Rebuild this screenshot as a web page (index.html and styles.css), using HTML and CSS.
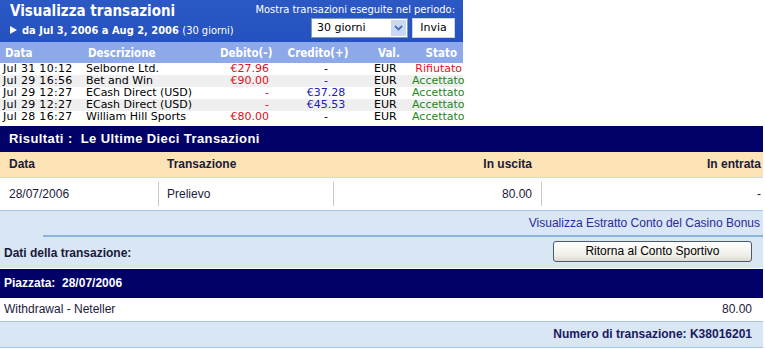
FILE: index.html
```html
<!DOCTYPE html>
<html lang="it">
<head>
    <meta charset="UTF-8">
    <title>Visualizza transazioni</title>
    <link rel="stylesheet" href="styles.css">
</head>
<body>
    <div class="panel">
        <div class="panelHead">
            <div class="headLeft">
                <div class="title">Visualizza transazioni</div>
                <div class="period"><svg class="arrow" width="7" height="8" viewBox="0 0 7 8"><polygon points="0,0 7,4 0,8" fill="#ffffff"/></svg>da Jul 3, 2006 a Aug 2, 2006 <span class="days">(30 giorni)</span></div>
            </div>
            <div class="headRight">
                <div class="showLabel">Mostra transazioni eseguite nel periodo:</div>
                <div class="controls">
                    <div class="select">30 giorni<span class="selBtn"><svg width="9" height="6" viewBox="0 0 9 6"><path d="M1 1 L4.5 4.5 L8 1" fill="none" stroke="#4d6fb8" stroke-width="1.8"/></svg></span></div>
                    <div class="sendBtn">Invia</div>
                </div>
            </div>
        </div>
        <table class="trans">
            <tr class="thead">
                <td class="cDate">Data</td>
                <td class="cDesc">Descrizione</td>
                <td class="cDeb">Debito(-)</td>
                <td class="cCred">Credito(+)</td>
                <td class="cVal">Val.</td>
                <td class="cStato">Stato</td>
            </tr>
            <tr>
                <td class="cDate">Jul 31 10:12</td><td class="cDesc">Selborne Ltd.</td>
                <td class="cDeb red">€27.96</td><td class="cCred">-</td><td class="cVal">EUR</td><td class="cStato red">Rifiutato</td>
            </tr>
            <tr class="alt">
                <td class="cDate">Jul 29 16:56</td><td class="cDesc">Bet and Win</td>
                <td class="cDeb red">€90.00</td><td class="cCred blue">-</td><td class="cVal">EUR</td><td class="cStato green">Accettato</td>
            </tr>
            <tr>
                <td class="cDate">Jul 29 12:27</td><td class="cDesc">ECash Direct (USD)</td>
                <td class="cDeb red">-</td><td class="cCred blue">€37.28</td><td class="cVal">EUR</td><td class="cStato green">Accettato</td>
            </tr>
            <tr class="alt">
                <td class="cDate">Jul 29 12:27</td><td class="cDesc">ECash Direct (USD)</td>
                <td class="cDeb red">-</td><td class="cCred blue">€45.53</td><td class="cVal">EUR</td><td class="cStato green">Accettato</td>
            </tr>
            <tr>
                <td class="cDate">Jul 28 16:27</td><td class="cDesc">William Hill Sports</td>
                <td class="cDeb red">€80.00</td><td class="cCred">-</td><td class="cVal">EUR</td><td class="cStato green">Accettato</td>
            </tr>
        </table>
    </div>

    <div class="results">
        <div class="navyBar">Risultati :&nbsp; Le Ultime Dieci Transazioni</div>
        <div class="resRow resHead">
            <div class="rDate">Data</div>
            <div class="rTrans">Transazione</div>
            <div class="rOut">In uscita</div>
            <div class="rIn">In entrata</div>
        </div>
        <div class="resRow resData">
            <div class="rDate">28/07/2006</div>
            <div class="rTrans sep">Prelievo</div>
            <div class="rOut sep">80.00</div>
            <div class="rIn sep">-</div>
        </div>
        <div class="linkRow"><a href="#">Visualizza Estratto Conto del Casino Bonus</a></div>
        <div class="detailBar">
            <div class="detailLabel">Dati della transazione:</div>
            <div class="backBtn">Ritorna al Conto Sportivo</div>
        </div>
        <div class="navyBar placed">Piazzata:&nbsp; 28/07/2006</div>
        <div class="whiteRow">
            <span>Withdrawal - Neteller</span>
            <span>80.00</span>
        </div>
        <div class="numRow">Numero di transazione: K38016201</div>
    </div>
</body>
</html>
```

FILE: styles.css
```css
body{
    margin: 0;
    background: #ffffff;
    font-family: "DejaVu Sans", Verdana, sans-serif;
}

.panel{
    width: 463px;
}
.panelHead{
    height: 42px;
    background: linear-gradient(#2c58c4, #2452c0);
    color: #ffffff;
    display: flex;
    justify-content: space-between;
}
.headLeft{
    padding: 2px 0 0 10px;
}
.title{
    font-family: "DejaVu Sans Condensed", sans-serif;
    font-weight: bold;
    font-size: 15px;
    line-height: 19px;
}
.period{
    font-family: "DejaVu Sans Condensed", sans-serif;
    font-weight: bold;
    font-size: 11px;
    margin-top: 3px;
}
.arrow{
    margin-right: 5px;
    vertical-align: 0;
}
.days{
    font-weight: normal;
}
.headRight{
    padding: 3px 8px 0 0;
    display: flex;
    flex-direction: column;
    align-items: flex-end;
}
.showLabel{
    font-family: "DejaVu Sans Condensed", sans-serif;
    font-size: 11px;
    line-height: 13px;
}
.controls{
    display: flex;
    gap: 4px;
    margin-top: 2px;
}
.select{
    width: 90px;
    height: 18px;
    background: #ffffff;
    border: 1px solid #7f9db9;
    color: #000000;
    font-size: 11px;
    line-height: 18px;
    padding-left: 5px;
    position: relative;
}
.selBtn{
    position: absolute;
    right: 1px;
    top: 1px;
    width: 15px;
    height: 16px;
    background: #c9d8f5;
    display: flex;
    align-items: center;
    justify-content: center;
}
.sendBtn{
    width: 41px;
    height: 18px;
    background: #ffffff;
    border: 1px solid #d0d0d0;
    color: #000000;
    font-size: 11px;
    line-height: 18px;
    text-align: center;
}

.trans{
    width: 463px;
    border-collapse: collapse;
    table-layout: fixed;
    font-size: 11px;
}
.trans td{
    box-sizing: border-box;
    padding: 0;
    height: 12px;
    line-height: 12px;
    white-space: nowrap;
    overflow: visible;
}
.trans .thead td{
    background: #8da9ea;
    color: #ffffff;
    font-family: "DejaVu Sans Condensed", sans-serif;
    font-weight: bold;
    font-size: 11.5px;
    height: 21px;
}
.trans .alt td{
    background: #efefef;
}
.trans .cDate{ width: 84px; padding-left: 3px; letter-spacing: 0.3px; }
.trans .thead .cDate{ padding-left: 5px; letter-spacing: 0; }
.trans .cDesc{ width: 136px; padding-left: 2px; }
.trans .thead .cDesc{ padding-left: 4px; }
.trans .cDeb{ width: 55px; text-align: right; padding-right: 6px; }
.trans .thead .cDeb{ padding-right: 3px; }
.trans .cCred{ width: 97px; text-align: center; padding-left: 5px; }
.trans .thead .cCred{ padding-left: 0; padding-right: 11px; }
.trans .cVal{ width: 40px; padding-left: 2px; }
.trans .thead .cVal{ padding-left: 6px; }
.trans .cStato{ width: 51px; text-align: right; padding-right: 1px; }
.trans .thead .cStato{ padding-right: 6px; }
.red{ color: #e0101a; }
.green{ color: #1a8a1a; }
.blue{ color: #2020b8; }

.results{
    width: 763px;
    margin-top: 3px;
    font-family: "Liberation Sans", Arial, sans-serif;
    font-size: 12px;
    color: #1a1a3a;
}
.navyBar{
    background: #000066;
    color: #ffffff;
    font-weight: bold;
    height: 26px;
    line-height: 26px;
    padding-left: 9px;
    font-size: 13px;
    letter-spacing: 0.4px;
}
.resRow{
    display: grid;
    grid-template-columns: 158px 175px 208px 1fr;
}
.resHead{
    background: #fde4b6;
    font-weight: bold;
    height: 25px;
    line-height: 25px;
    border-bottom: 1px solid #c9d9ea;
}
.resHead .rDate{ padding-left: 9px; }
.resHead .rTrans{ padding-left: 9px; }
.rOut, .rIn{ text-align: right; padding-right: 9px; }
.rIn{ padding-right: 2px; }
.resData{
    background: #ffffff;
    height: 32px;
    align-items: center;
    border-bottom: 1px solid #a8c4e2;
}
.resData div{
    height: 24px;
    line-height: 24px;
}
.resData .rDate{ padding-left: 9px; }
.resData .rTrans{ padding-left: 8px; }
.sep{
    border-left: 1px solid #c8c8c8;
}
.linkRow{
    background: #d9e6f4;
    height: 24px;
    line-height: 24px;
    text-align: right;
    padding-right: 3px;
}
.linkRow a{
    color: #2a2aa0;
    text-decoration: none;
}
.detailBar{
    background: #d9e6f4;
    border-top: 2px solid #8cb4e2;
    margin-left: 43px;
    height: 31px;
    display: flex;
    justify-content: space-between;
    align-items: center;
    box-shadow: -43px 0 0 #d9e6f4;
}
.detailLabel{
    font-weight: bold;
    margin-left: -39px;
}
.backBtn{
    width: 197px;
    height: 19px;
    line-height: 19px;
    text-align: center;
    color: #000000;
    border: 1px solid #4a5a6a;
    border-radius: 3px;
    background: linear-gradient(#ffffff, #f0efe8 70%, #dcdad0);
    margin-right: 11px;
    margin-bottom: 2px;
}
.placed{
    margin-top: 1px;
    height: 29px;
    line-height: 29px;
    padding-left: 4px;
    font-size: 12px;
    letter-spacing: 0;
}
.whiteRow{
    background: #ffffff;
    height: 23px;
    line-height: 23px;
    display: flex;
    justify-content: space-between;
    padding: 0 11px 0 4px;
    border-bottom: 1px solid #a8c4e2;
}
.numRow{
    background: #d9e6f4;
    height: 25px;
    line-height: 25px;
    text-align: right;
    padding-right: 11px;
    font-weight: bold;
    color: #1a1a60;
    border-bottom: 1px solid #a8c4e2;
}
```
